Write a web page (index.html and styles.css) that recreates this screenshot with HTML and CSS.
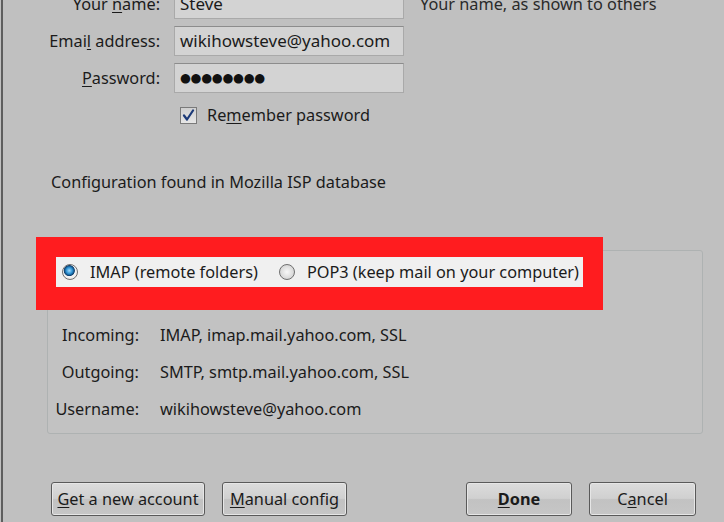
FILE: index.html
```html
<!DOCTYPE html>
<html>
<head>
<meta charset="utf-8">
<link rel="stylesheet" href="styles.css">
</head>
<body>
<div class="window">
  <div class="form">
    <label class="lbl">Your <u>n</u>ame:</label>
    <div class="input">Steve</div>
    <div class="hint">Your name, as shown to others</div>

    <label class="lbl">Emai<u>l</u> address:</label>
    <div class="input">wikihowsteve@yahoo.com</div>
    <div></div>

    <label class="lbl"><u>P</u>assword:</label>
    <div class="input dots">●●●●●●●●</div>
    <div></div>

    <div></div>
    <div class="check-row">
      <span class="checkbox"><svg width="13" height="13" viewBox="0 0 13 13"><path d="M2 6.5 L5 10.5 L11 1.5" fill="none" stroke="#1c3a78" stroke-width="2.2" stroke-linejoin="round" stroke-linecap="round"/></svg></span>
      <span>Re<u>m</u>ember password</span>
    </div>
    <div></div>
  </div>

  <div class="config">Configuration found in Mozilla ISP database</div>

  <div class="box">
    <div class="annot">
      <div class="radios">
        <span class="radio on"></span><span class="rtext">IMAP (remote folders)</span>
        <span class="radio"></span><span class="rtext">POP3 (keep mail on your computer)</span>
      </div>
    </div>
    <div class="details">
      <div class="dl">Incoming:</div><div>IMAP, imap.mail.yahoo.com, SSL</div>
      <div class="dl">Outgoing:</div><div>SMTP, smtp.mail.yahoo.com, SSL</div>
      <div class="dl">Username:</div><div>wikihowsteve@yahoo.com</div>
    </div>
  </div>

  <div class="buttons">
    <div class="left">
      <button class="btn w154"><u>G</u>et a new account</button>
      <button class="btn w125"><u>M</u>anual config</button>
    </div>
    <div class="right">
      <button class="btn w106 bold"><u>D</u>one</button>
      <button class="btn w107">C<u>a</u>ncel</button>
    </div>
  </div>
</div>
</body>
</html>
```
FILE: styles.css
```css
html, body {
  margin: 0;
  padding: 0;
}
body {
  width: 724px;
  height: 522px;
  overflow: hidden;
  background: #c0c0c0;
  font-family: "Noto Sans", "Open Sans", sans-serif;
  font-size: 16.3px;
  color: #1b1b1b;
}
.window {
  height: 522px;
  box-sizing: border-box;
  margin-left: 1px;
  border-left: 2px solid #5e5e5e;
  overflow: hidden;
}
u {
  text-decoration: underline;
  text-underline-offset: 2px;
  text-decoration-thickness: 1px;
}
.form {
  margin-top: -11px;
  display: grid;
  grid-template-columns: 157px 230px auto;
  column-gap: 14px;
  row-gap: 7px;
  align-items: center;
  white-space: nowrap;
}
.form .hint {
  margin-left: 2px;
  color: #2a2a2a;
}
.lbl {
  text-align: right;
}
.input {
  height: 30px;
  box-sizing: border-box;
  background: #d3d3d3;
  border: 1px solid #a9a9a9;
  border-top-color: #8c8c8c;
  padding: 0 0 0 5px;
  line-height: 28px;
  font-size: 17px;
}
.input.dots {
  font-family: "DejaVu Sans", sans-serif;
  font-size: 12.5px;
  letter-spacing: -0.3px;
  color: #111;
}
.check-row {
  display: flex;
  align-items: center;
  gap: 10px;
  padding-left: 6px;
  margin-top: 3px;
  height: 24px;
}
.checkbox {
  width: 17px;
  height: 17px;
  box-sizing: border-box;
  border: 1px solid #7a7a7a;
  background: linear-gradient(#d0d0d0, #e6e6e6);
  display: flex;
  align-items: center;
  justify-content: center;
}
.config {
  margin: 43px 0 0 48px;
  height: 24px;
  line-height: 24px;
}
.box {
  position: relative;
  margin: 56px 21px 0 44px;
  height: 184px;
  box-sizing: border-box;
  border: 1px solid #aeb2b2;
  border-radius: 3px;
  background: #c2c2c2;
}
.annot {
  position: absolute;
  left: -12px;
  top: -14px;
  width: 567px;
  height: 73px;
  box-sizing: border-box;
  background: #ff1c1f;
  padding: 20px 20px 23px 20px;
}
.radios {
  height: 30px;
  background: #f0f0f0;
  display: flex;
  align-items: center;
  padding-left: 6px;
  white-space: nowrap;
  overflow: hidden;
}
.radio {
  width: 16px;
  height: 16px;
  border-radius: 50%;
  border: 1px solid #6f6f6f;
  background: radial-gradient(circle at 50% 50%, #f8f8f8 0, #dcdcdc 60%, #c8c8c8 100%);
  box-sizing: border-box;
  margin-right: 12px;
  flex: none;
}
.radio.on {
  background: radial-gradient(circle at 45% 40%, #9fdcff 0, #2a8fd0 28%, #0d3f6e 45%, #f4f4f4 52%, #e0e0e0 100%);
}
.rtext {
  margin-right: 21px;
  flex: none;
}
.details {
  padding-top: 72px;
  display: grid;
  grid-template-columns: 91px auto;
  column-gap: 21px;
  row-gap: 13px;
  line-height: 24px;
  white-space: nowrap;
}
.dl {
  text-align: right;
}
.buttons {
  margin: 48px 28px 0 48px;
  display: flex;
  justify-content: space-between;
}
.left, .right {
  display: flex;
  gap: 17px;
}
.btn {
  height: 34px;
  box-sizing: border-box;
  border: 1px solid #5a5a5a;
  border-radius: 3px;
  background: linear-gradient(#dcdcdc 0%, #d0d0d0 48%, #c2c2c2 52%, #c6c6c6 100%);
  box-shadow: inset 0 0 0 1px #e6e6e6;
  font-family: "Noto Sans", "Open Sans", sans-serif;
  font-size: 16.3px;
  color: #1b1b1b;
  padding: 0;
  white-space: nowrap;
}
.btn.bold { font-weight: bold; }
.w154 { width: 154px; }
.w125 { width: 125px; }
.w106 { width: 106px; }
.w107 { width: 107px; }
```
